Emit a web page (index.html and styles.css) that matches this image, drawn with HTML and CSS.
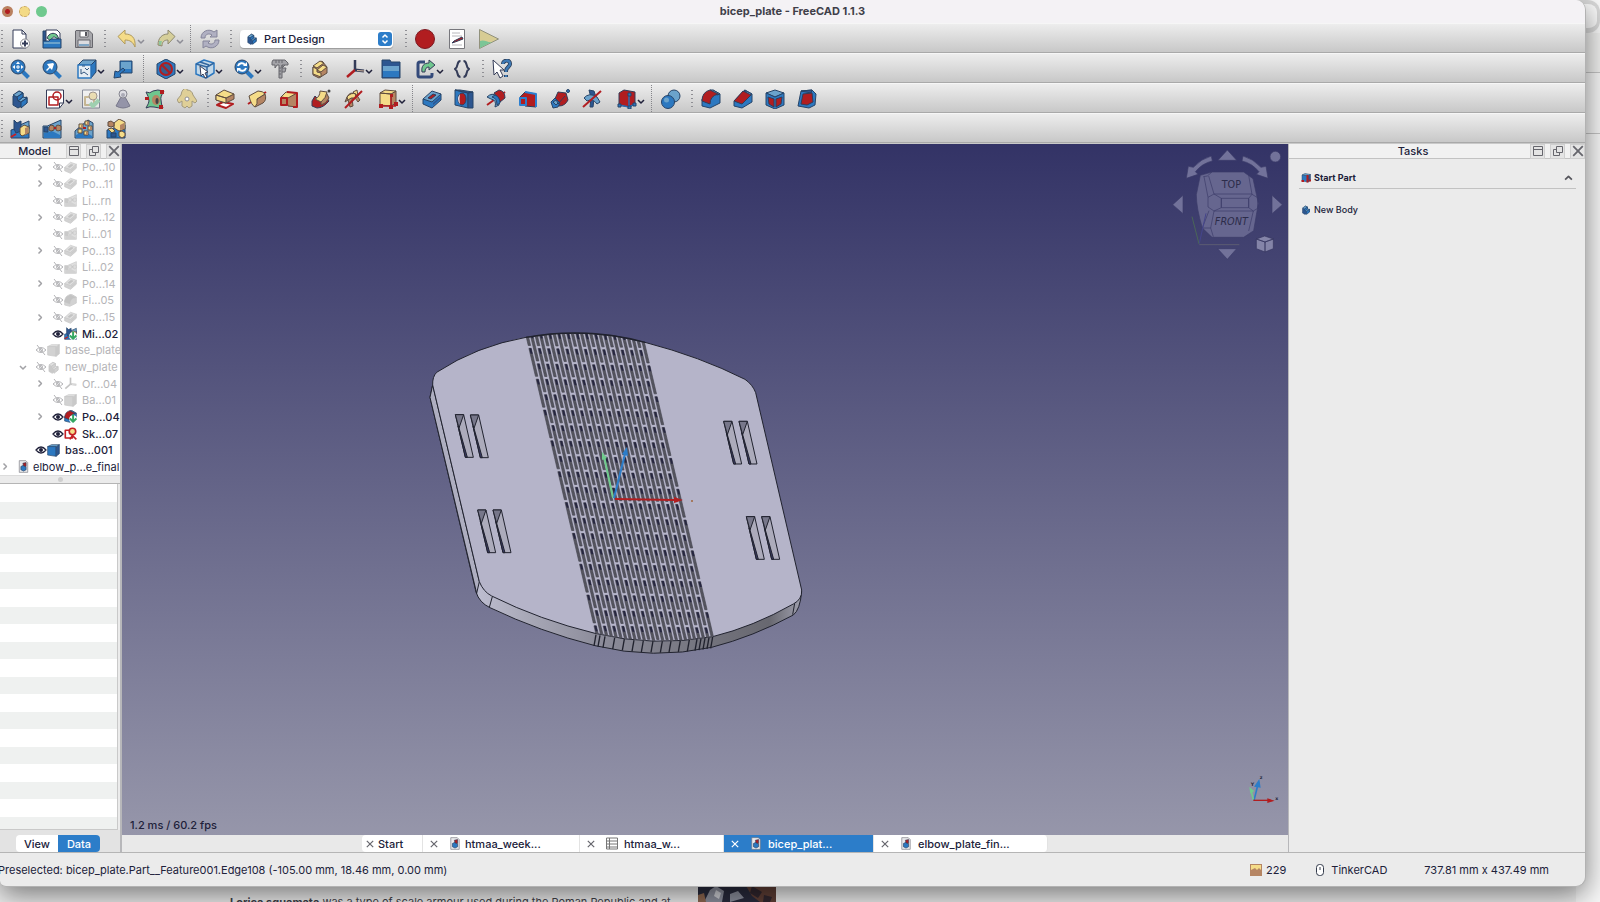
FILE: index.html
```html
<!DOCTYPE html>
<html lang="en">
<head>
<meta charset="utf-8">
<title>bicep_plate - FreeCAD 1.1.3</title>
<link rel="stylesheet" href="styles.css">
</head>
<body>
<svg class="defs" aria-hidden="true">
  <symbol id="new" viewBox="0 0 20 20"><path class="w" d="M3 1h9l4 4v14H3z"/><path class="n" d="M12 1v4h4"/><circle class="w" cx="15" cy="14.500" r="4.500" stroke="#8a8a90"/><path class="n thick" d="M15 11.500v6M12 14.500h6"/></symbol>
  <symbol id="open" viewBox="0 0 20 20"><path class="d" d="M1 2h4v10H1z"/><path class="w" d="M4 1h11l3 3v10H4z"/><path class="g" d="M5 9c2-5 7-6 10-3l2 4-3-1c-2-2-4-1-5 3z"/><path class="b" d="M1 12h6l2-2h10v9H1z"/><path class="l nos" d="M2 13h16v2H2z"/></symbol>
  <symbol id="save" viewBox="0 0 20 20"><path fill="#a8a8ac" stroke="#66666c" d="M2 1.500h13L18.500 5v13.500h-17V2z"/><path class="w" stroke="#66666c" d="M6 2h8v6H6z"/><path class="nos" fill="#55555c" d="M11 3h2v4h-2z"/><path fill="#dcdce0" stroke="#66666c" d="M4 11h12v7H4z"/><path class="nos" fill="#7fa5c4" d="M5 15h10v2H5z"/></symbol>
  <symbol id="undo" viewBox="0 0 20 20"><path class="y" stroke="#b09a5c" d="M1 7.500 8 1v4c6 0 11 3 10 13-2-5-5-7-10-7v4z"/></symbol>
  <symbol id="redo" viewBox="0 0 20 20"><path fill="#d6cf9a" stroke="#8e8a70" d="M19 7.500 12 1v4C6 5 2 9 2 16l4 1c0-4 2-6 6-6v4z"/><path class="nos" fill="#8fc59c" d="M3 12h3l-1 4H3z"/></symbol>
  <symbol id="refresh" viewBox="0 0 20 20"><path fill="#b0b0c2" stroke="#85859a" d="M1 9c0-7 8-10 13-6l3-2v7h-7l2-2C9 4 5 5 5 9zM19 11c0 7-8 10-13 6l-3 2v-7h7l-2 2c3 2 7 1 7-3z"/></symbol>
  <symbol id="body" viewBox="0 0 20 20"><path class="d" d="M3 7v9l5 3 9-5V8l-4 1V4l-4-2z"/><path class="l" d="m3 6 6-4 4 2-6 4zM8 12l5-4 4 1-6 4z"/><path class="b" d="m7 8 6-4v4l-5 4zM11 13l6-4v5l-6 5z"/></symbol>
  <symbol id="record" viewBox="0 0 20 20"><circle class="r" cx="10" cy="10" r="9.500" stroke="#7c1a22"/></symbol>
  <symbol id="macro" viewBox="0 0 20 20"><path class="w" stroke="#77777c" d="M2.500.5h15v19h-15z"/><path class="n" stroke="#b8b8bc" d="M5 4h8M5 7h10M5 16h10"/><path class="r" d="m7 12 8-4 1 2-8 3-3 1z"/></symbol>
  <symbol id="play" viewBox="0 0 20 20"><path fill="#d7cc94" stroke="#91917c" d="M.5.5 19.500 10 .5 19.500z"/><path class="nos" fill="#7bc596" d="M1 12c4-2 8 2 12 1L1 19z"/></symbol>

  <symbol id="zoomfit" viewBox="0 0 20 20"><path class="n" stroke="#2c78c0" stroke-width="4" d="m13 13 5.500 5.500"/><circle class="b" cx="8" cy="8" r="7"/><path class="w nos" d="m8 2.500 2 2.500H6zM8 13.500 6 11h4zM2.500 8 5 6v4zM13.500 8 11 10V6z"/><path class="n" stroke="#fff" d="M8 6v4M6 8h4"/></symbol>
  <symbol id="zoomsel" viewBox="0 0 20 20"><path class="n" stroke="#2c78c0" stroke-width="4" d="m13 13 5.500 5.500"/><circle class="b" cx="8" cy="8" r="7"/><path class="w nos" d="m5 5 6-1 1 1-2 6-2-2-3 3-1-1 3-3z"/></symbol>
  <symbol id="cube" viewBox="0 0 20 20"><path class="l" d="M1 6 6 1h13l-5 5z"/><path class="b" d="m14 6 5-5v12l-5 6z"/><path fill="#e4ecf3" stroke="#2c78c0" stroke-width="1.500" d="M1 6h13v13H1z"/><path class="n" stroke="#33567f" d="M4 10v5l3-2 4 3M8 9l2 2 2-2M5 7h3"/></symbol>
  <symbol id="align" viewBox="0 0 20 20"><path class="b" d="M7 2h12v12H7z"/><path class="l nos" d="M8 3h10v7H8z"/><path class="b" d="m10 9 2 2-5 4 1 3-7 1 1-7 3 1z"/></symbol>
  <symbol id="nodraw" viewBox="0 0 20 20"><path class="b" d="m10 0 9 5v10l-9 5-9-5V5z"/><circle fill="#3a5d8c" cx="10" cy="10" r="6"/><circle class="n" cx="10" cy="10" r="6" stroke="#b11d20" stroke-width="2"/><path class="n" stroke="#b11d20" stroke-width="2" d="m6 6 8 8"/></symbol>
  <symbol id="cubesel" viewBox="0 0 20 20"><path fill="#c3d8e8" stroke="#2c78c0" stroke-width="1.500" d="m1 5 8-4 10 3v10l-8 5-10-4z"/><path class="n" stroke="#33679f" stroke-width="1.500" d="m1 5 11 3 7-4M12 8v11M5 3l9 3"/><path class="w" d="m5 7 8 6-3 1 2 4-2 1-2-4-2 2z"/></symbol>
  <symbol id="zoomsync" viewBox="0 0 20 20"><path class="n" stroke="#2c78c0" stroke-width="4" d="m13 13 5.500 5.500"/><circle class="b" cx="8" cy="8" r="7"/><path class="n" stroke="#fff" stroke-width="2" d="M4 7c1-3 5-4 7-1M12 9c-1 3-5 4-7 1"/><path class="w nos" d="M9 7h4V3zM3 9v4l4-4z"/></symbol>
  <symbol id="caliper" viewBox="0 0 20 20"><path fill="#a3a3a8" stroke="#66666c" d="M3 1h12l3 3v2h-6v13H9V6H7L5 9V6H2V3zM12 9h4l-1 4h-3M12 6v3l3-3"/><path class="n" stroke="#66666c" d="M6 1v3M9 1v3M12 1v3M9 9h2M9 12h2M9 15h2"/></symbol>
  <symbol id="part" viewBox="0 0 20 20"><path class="t" d="M3 8v8l6 3 8-5V8l-5-6z"/><path class="y" d="m3 7 7-5 4 2-7 5zM3 8l4 2v3l4 1v4l-8-3zM7 11l6-5 4 2-6 5z"/></symbol>
  <symbol id="axes" viewBox="0 0 20 20"><path class="n" stroke="#343c58" stroke-width="2.500" d="M10 11V1"/><path class="n" stroke="#b11d20" stroke-width="2.500" d="m10 11-8 7"/><path class="n" stroke="#343c58" stroke-width="3" d="m10 11 9 1"/><path class="n" stroke="#d8b79a" d="m12 11.500 7 .5"/></symbol>
  <symbol id="folder" viewBox="0 0 20 20"><path class="d" d="M1 1h8l1 2h9v16H1z"/><path class="b nos" d="M2 7h16v11H2z"/><path class="l nos" d="M2 7h16v5H2z"/></symbol>
  <symbol id="link" viewBox="0 0 20 20"><path class="n" stroke="#344a7a" stroke-width="3" d="M9 3H4Q2 3 2 5v11q0 2 2 2h10q2 0 2-2v-2"/><path class="g" d="M6 13C5 7 8 4 13 4V1l6 5-6 5V8c-3 0-4 2-4 5z"/></symbol>
  <symbol id="braces" viewBox="0 0 20 20"><path class="n thick" d="M8.500 2C4 2 7 8 3 10c4 2 1 8 5.500 8M11.500 2c4.500 0 1.500 6 5.500 8-4 2-1 8-5.500 8"/></symbol>
  <symbol id="whats" viewBox="0 0 20 20"><path class="n" stroke="#25364f" stroke-width="4" d="M11 5c0-4 7-5 7 0 0 3-4 3-4 7v1M14 16v2"/><path class="n" stroke="#3e79b4" stroke-width="2.500" d="M11 5c0-4 7-5 7 0 0 3-4 3-4 7v1M14 16v2"/><path class="w" d="m1 1 11 10H8l3 6-3 2-3-6-3 3z"/></symbol>

  <symbol id="sketch" viewBox="0 0 20 20"><path class="w" d="M1.500 1h17v13l-4 5h-13z"/><path class="n" stroke="#b11d20" stroke-width="1.500" d="M4 8h9v8H4z"/><circle class="n" cx="12" cy="7" r="4" stroke="#b11d20" stroke-width="1.500"/><path class="n" d="M18.500 14h-4v5"/></symbol>
  <symbol id="sketchok" viewBox="0 0 20 20"><g opacity=".5"><path class="w" d="M1.500 1h17v18h-17z"/><path class="n" stroke="#b89a55" stroke-width="2" d="M4 8h9v8H4z"/><circle class="y" cx="12" cy="7" r="4"/></g><path class="n" stroke="#9fcfb0" stroke-width="4" d="m9 14 3 3 6-6"/></symbol>
  <symbol id="weight" viewBox="0 0 20 20"><path fill="#9494a8" stroke="#77778a" d="m8 8-5 9q7 4 14 0l-5-9z"/><circle fill="#dedee4" stroke="#85858f" cx="10" cy="5" r="4"/><circle class="nos" fill="#aaaab6" cx="10" cy="6" r="2"/></symbol>
  <symbol id="subshape" viewBox="0 0 20 20"><path class="g" d="M1 3q4 2 7-1 4-2 11 0-4 6-3 9 0 4 2 8-5 0-9-1-4-1-8 1 3-5 3-7 0-4-3-9z"/><ellipse class="t nos" cx="11" cy="11" rx="4" ry="5"/><ellipse fill="#444" cx="12" cy="12" rx="1.500" ry="3"/><path class="r nos" d="M15 1h4v4h-4zM0 8h4v3H0zM14 16h4v4h-4z"/></symbol>
  <symbol id="clone" viewBox="0 0 20 20"><path fill="#dfcf97" stroke="#a39a7d" d="M10 1q5 0 6 5l4 6-2 2-3-2v5l-3 2-2-2-2 2-3-2v-5l-3 2-2-3 4-5q1-7 6-7z"/><circle class="w" cx="10" cy="10" r="2" stroke="#8f8f96"/></symbol>
  <symbol id="pad" viewBox="0 0 20 20"><path fill="#fff" stroke="#b11d20" stroke-width="2" d="m2 16 6-3 10 2-7 4z"/><path class="t" d="m1 6 10 3 8-4v5l-8 4-10-3z"/><path class="y" d="m1 6 8-5 10 4-8 4zM1 6l10 3v5L1 11z"/></symbol>
  <symbol id="revolve" viewBox="0 0 20 20"><path class="n" stroke="#b11d20" stroke-width="2" d="M1 15 19 3"/><path class="t" d="m8 18 8-4q4-3 2-9l-8 5z"/><path class="y" d="m2 7 9-5q5 0 7 3l-8 5q1 5-2 8Q4 16 2 7z"/></symbol>
  <symbol id="loft" viewBox="0 0 20 20"><path class="t" d="m7 8 11-4v14l-9-1z"/><path class="y" d="m2 8 5-5 11 1-9 5z"/><path fill="#b58563" stroke="#b11d20" stroke-width="2" d="M2 9h6v7H2z"/><path class="n" stroke="#b11d20" stroke-width="2" d="m8 3 10 1v14h-4"/></symbol>
  <symbol id="pipe" viewBox="0 0 20 20"><path class="r" d="m1 12 3-5 6 6 6-4 2 3q-6 7-12 7l-5-2z"/><path class="t" d="M10 12q5-3 5-9l3 6q-3 6-8 7z"/><path class="y" d="M4 10q5-2 5-8l7 1q-1 6-6 10z"/><circle fill="#444" cx="18" cy="2" r="1.500"/></symbol>
  <symbol id="helix" viewBox="0 0 20 20"><path class="t" d="M4 8q3-6 9-3l4 6-2 2q-2-5-6-4l1 8-3 1-2-7-3 2z"/><path class="y" d="M4 8q4-5 9-3l-1 4q-4-1-7 2zM10 3l4-2 1 6-3-2z"/><path class="n" stroke="#b11d20" stroke-width="2" d="M2 19 19 2"/></symbol>
  <symbol id="prim" viewBox="0 0 20 20"><path class="t" d="m13 5 5-3v12l-5 3z"/><path class="y" d="M2 4 7 1l11 1-5 3zM2 4l11 1v12L2 16z"/><path class="n" stroke="#b11d20" stroke-width="1.500" d="M13 6v11M3 17h15"/><path class="r nos" d="M1 15h4v4H1zM11 16h4v4h-4zM16 13h4v4h-4zM12 5h3v3h-3z"/></symbol>
  <symbol id="startpart" viewBox="0 0 20 20"><path class="l" d="M2 4 8 1l11 2-5 3z"/><path class="b" d="M2 4l12 2v12L2 16z"/><path class="d" d="m14 6 5-3v12l-5 3z"/><path class="r nos" d="M11 4h4v15h-4zM1 14h5v4H1zM16 13h4v4h-4z"/></symbol>

  <symbol id="pocket" viewBox="0 0 20 20"><path class="b" d="M1 10v5l9 4 9-8V5L10 9z"/><path class="l" d="m1 10 9-8 9 3-9 8z"/><path class="r" d="m6 9 5-4 3 1-5 4z"/><path class="d nos" d="m11 14 7-6v2l-7 6z"/></symbol>
  <symbol id="hole" viewBox="0 0 20 20"><path class="b" d="m1 1 13 3v15L1 16z"/><path class="d" d="M14 4l5-1v16h-5zM1 1h5l13 2-5 1z"/><ellipse class="r" cx="8" cy="10" rx="4" ry="6"/><path class="nos" fill="#dbe6ef" d="M6 5q-4 5 0 10-1-5 0-10z"/></symbol>
  <symbol id="groove" viewBox="0 0 20 20"><path class="n" stroke="#b11d20" stroke-width="2" d="M1 16 19 3"/><path class="r" d="m8 4 5-3q6 1 6 8l-5 4z"/><path class="l" d="M1 8q5-5 10-1 3 3 2 9l-4 2q2-7-4-8z"/><path class="b" d="M6 8q5 1 5 8l3-2q0-6-5-8z"/></symbol>
  <symbol id="subloft" viewBox="0 0 20 20"><path class="r" d="m2 8 5-5 11 2v13l-11-1z"/><path fill="#b11d20" stroke="#2c7fd0" stroke-width="2" d="M2 9h6v7H2z"/><path class="n" stroke="#2c7fd0" stroke-width="2" d="m7 3 11 2v13"/></symbol>
  <symbol id="subpipe" viewBox="0 0 20 20"><path class="r" d="M8 3l8 1 2 7q-3 6-9 6l-5-5z"/><path class="b" d="m1 13 4-4 5 5-2 4-5 1z"/><path class="l" d="m3 13 3-2 2 3-2 2z"/><path class="n" d="m8 15 7-8"/><circle class="b" cx="18" cy="2" r="1.500"/></symbol>
  <symbol id="subhelix" viewBox="0 0 20 20"><path class="d" d="m7 1 5 1 2 6-2 2-1 8H8l1-9z"/><path class="l" d="M2 9q5-6 13-1l3 5-3 2q-4-6-10-3z"/><path class="n" stroke="#b11d20" stroke-width="2" d="M1 18 19 2"/></symbol>
  <symbol id="subprim" viewBox="0 0 20 20"><path class="r" d="M2 4 7 1l11 2v12l-6 3-10-2z"/><path class="n" stroke="#2c6db3" stroke-width="1.500" d="M12 6v12M2 16l10 2 6-3"/><path class="b" d="M1 15h3v3H1zM11 17h3v3h-3zM16 14h3v3h-3zM11 4h3v3h-3z"/></symbol>
  <symbol id="boolean" viewBox="0 0 20 20"><circle class="l" cx="13" cy="7" r="6"/><circle class="b" cx="7" cy="13" r="6.500"/><circle class="l nos" cx="5.500" cy="11" r="2.500"/></symbol>
  <symbol id="fillet" viewBox="0 0 20 20"><path class="b" d="M1 10v7l8 2 10-5V5l-7-4z"/><path class="l" d="M9 1h3l7 4-3 1z"/><path class="r" d="M1 12Q1 3 9 1l8 4q-8 2-8 10z"/></symbol>
  <symbol id="chamfer" viewBox="0 0 20 20"><path class="b" d="M1 12v5l8 2 10-6V5l-7-4z"/><path class="l" d="m11 1 8 4-3 2z"/><path class="r" d="m1 12 9-10 8 4-9 9z"/></symbol>
  <symbol id="draft" viewBox="0 0 20 20"><path class="l" d="M1 4 10 1l9 3-9 4z"/><path class="b" d="M1 4v12l9 4 9-4V4l-9 4z"/><path class="r" d="m3 8 6 2v8l-5-3zM17 8l-6 2v8l5-3z"/></symbol>
  <symbol id="thick" viewBox="0 0 20 20"><path class="b" d="m4 2 11-1 4 4-1 11-6 3-11-2z"/><path class="d" d="m4 2 11-1-1 3z"/><path class="r" d="m6 5 9-1 1 9-6 3-6-1z"/></symbol>

  <symbol id="mirror" viewBox="0 0 20 20"><path class="b" d="M1 11 19 6v13H1z"/><path class="l" d="m10 6 9-4v8l-6 2z"/><path class="d" d="m4 1 3 3 4-2v10l-5 2-2-4z"/><path class="y" d="m10 9 4-3 5 2v6l-7 3-2-2z"/><path class="t nos" d="m15 9 3-1v6l-3 2z"/><path class="n" stroke="#c42125" stroke-width="2" d="m1 18 5-3"/></symbol>
  <symbol id="linear" viewBox="0 0 20 20"><path class="l" d="M1 7q4 1 9-2l9-4v18H1z"/><path class="b nos" d="m2 14 8-2 8 4v3H2z"/><path class="d" d="M2 8h4v5H2z"/><path class="t" d="m7 8 2-2 3 1v4l-3 1-2-1zM14 7l2-1 3 1v4l-3 1-2-1z"/><path class="r nos" d="M12 8h2v2h-2z"/></symbol>
  <symbol id="polar" viewBox="0 0 20 20"><path class="l" d="M1 12 14 1l5 3v15H1z"/><path class="b nos" d="m2 16 8-4 8 5v2H2z"/><path class="y" d="M5 5h4v4H5zM11 2h4v4h-4zM14 7h4v4h-4zM10 12h4v4h-4zM4 10h4v4H4z"/><path class="t nos" d="M7 6h2v3H7zM13 3h2v3h-2zM16 8h2v3h-2zM12 13h2v3h-2z"/><path class="r nos" d="M9 8h3v2H9z"/></symbol>
  <symbol id="multi" viewBox="0 0 20 20"><path class="b" d="M1 11 19 6v13H1z"/><path class="y" d="m8 4 5-4 6 3v7l-6 2-5-3z"/><path class="t nos" d="m14 6 4-2v6l-4 1z"/><path class="t" d="m2 3 3-1 3 2v3L5 8 2 7z"/><path class="y" d="m13 13 3-1 3 2v3l-3 2-3-2zM2 10l4-1 3 3-3 2z"/><path class="d" d="M5 14h5v4H5z"/></symbol>

  <symbol id="chev" viewBox="0 0 8 5"><path fill="none" stroke="currentColor" stroke-width="1.500" d="m1 1 3 3 3-3"/></symbol>
  <symbol id="close" viewBox="0 0 10 10"><path fill="none" stroke="currentColor" stroke-width="1.500" d="m1 1 8 8M9 1 1 9"/></symbol>
  <symbol id="dockmin" viewBox="0 0 12 12"><path fill="none" stroke="currentColor" d="M1.500 1.500h9v9h-9zM1.500 4.500h9"/></symbol>
  <symbol id="dockfloat" viewBox="0 0 12 12"><path fill="none" stroke="currentColor" d="M4.500 1.500h6v6h-6zM4.500 4.500h-3v6h6v-3"/></symbol>
  <symbol id="eye" viewBox="0 0 12 10"><path fill="none" stroke="currentColor" stroke-width="1.300" d="M1 5q5-6 10 0-5 6-10 0z"/><circle fill="currentColor" cx="6" cy="5" r="2"/></symbol>
  <symbol id="eyeoff" viewBox="0 0 12 10"><path fill="none" stroke="currentColor" d="M1 5q5-5 10 0-5 5-10 0zM2 0l8 10"/><circle fill="none" stroke="currentColor" cx="6" cy="5" r="1.500"/></symbol>
  <symbol id="solid" viewBox="0 0 20 20"><path class="l" d="m1 4 6-3h12l-5 4z"/><path class="b" d="M1 4h13v15L1 17z"/><path class="d" d="m14 5 5-4v14l-5 4z"/></symbol>
  <symbol id="tip" viewBox="0 0 20 20"><circle fill="#fff" cx="14" cy="14" r="6"/><path fill="none" stroke="#35a763" stroke-width="3" d="M14 7v10M9 13l5 5 5-5"/></symbol>
  <symbol id="sketchtree" viewBox="0 0 20 20"><path fill="#fff" stroke="#c42125" stroke-width="2.500" d="M2 5h11v12H2z"/><circle fill="#f5dc88" stroke="#c42125" stroke-width="2.500" cx="13" cy="7" r="5"/><path fill="none" stroke="#c42125" stroke-width="2.500" d="m9 19 4-6 6 6"/></symbol>
  <symbol id="file" viewBox="0 0 16 20"><path fill="#e9e9ec" stroke="#77777f" d="M1.500 1h10l3 3v15h-13z"/><path class="b" d="m4 10 4-2 4 3v4l-4 2-4-2z"/><path class="r" d="m7 5 5-1v6L8 9z"/></symbol>
  <symbol id="sheet" viewBox="0 0 12 12"><path fill="#fff" stroke="#777" d="M.5.500h11v11H.5zM.5 3.500h11M.5 6.500h11M.5 9.500h11M3.500.500v11"/></symbol>
</svg>

<div class="desktop" aria-hidden="true">
  <div class="browser-edge"><span class="edge-tab"></span><span class="edge-bar"></span><span class="edge-bar"></span></div>
  <p class="article"><b>Lorica squamata</b> was a type of scale armour used during the Roman Republic and at</p>
  <svg class="photo" viewBox="0 0 78 16" preserveAspectRatio="xMidYMin slice"><path fill="#292b3d" d="M0 0h78v16H0z"/><path fill="#8c8f9d" d="M6 16 12 4l6-4 8 5-2 11zM32 16V8l8-3 6 7z"/><path fill="#d0d1d7" d="m18 4 5 3-2 6-5-3z"/><path fill="#603f36" d="M48 0h30v16H62l-8-6z"/><path fill="#32272f" d="m54 0 10 6-4 6-8-5zM66 9l8 2-2 5h-7z"/><path fill="#8e6750" d="m0 9 6-2 2 9H0z"/></svg>
</div>

<div class="window">
  <header class="titlebar">
    <div class="lights"><button class="light light-close" aria-label="Close window"></button><button class="light light-min" aria-label="Minimize"></button><button class="light light-max" aria-label="Zoom window"></button></div>
    <h1>bicep_plate - FreeCAD 1.1.3</h1>
  </header>

  <div class="toolbar">
    <i class="grip grip-first"></i>
    <button class="tool" aria-label="New"><svg><use href="#new"/></svg></button>
    <button class="tool" aria-label="Open"><svg><use href="#open"/></svg></button>
    <button class="tool" aria-label="Save"><svg><use href="#save"/></svg></button>
    <i class="grip"></i>
    <button class="tool menu faded" aria-label="Undo"><svg><use href="#undo"/></svg><svg class="chev"><use href="#chev"/></svg></button>
    <button class="tool menu faded" aria-label="Redo"><svg><use href="#redo"/></svg><svg class="chev"><use href="#chev"/></svg></button>
    <i class="sep"></i>
    <button class="tool" aria-label="Refresh"><svg><use href="#refresh"/></svg></button>
    <i class="grip"></i>
    <div class="workbench"><svg class="wb-icon"><use href="#body"/></svg><select aria-label="Workbench"><option>Part Design</option></select><svg class="wb-step" viewBox="0 0 14 14"><rect width="14" height="14" rx="3" fill="#2c7dc9"/><path fill="none" stroke="#fff" stroke-width="1.500" d="m4.500 5.500 2.500-2.500 2.500 2.500M4.500 8.500 7 11l2.500-2.500"/></svg></div>
    <i class="grip"></i>
    <button class="tool" aria-label="Record macro"><svg><use href="#record"/></svg></button>
    <button class="tool" aria-label="Macros"><svg><use href="#macro"/></svg></button>
    <button class="tool" aria-label="Execute macro"><svg><use href="#play"/></svg></button>
  </div>

  <div class="toolbar">
    <i class="grip grip-first"></i>
    <button class="tool" aria-label="Fit all"><svg><use href="#zoomfit"/></svg></button>
    <button class="tool" aria-label="Fit selection"><svg><use href="#zoomsel"/></svg></button>
    <button class="tool menu" aria-label="Standard views"><svg><use href="#cube"/></svg><svg class="chev"><use href="#chev"/></svg></button>
    <button class="tool" aria-label="Align to selection"><svg><use href="#align"/></svg></button>
    <i class="sep"></i>
    <button class="tool menu" aria-label="Draw style"><svg><use href="#nodraw"/></svg><svg class="chev"><use href="#chev"/></svg></button>
    <button class="tool menu" aria-label="Box selection"><svg><use href="#cubesel"/></svg><svg class="chev"><use href="#chev"/></svg></button>
    <button class="tool menu" aria-label="Tree view sync"><svg><use href="#zoomsync"/></svg><svg class="chev"><use href="#chev"/></svg></button>
    <button class="tool" aria-label="Measure"><svg><use href="#caliper"/></svg></button>
    <i class="grip"></i>
    <button class="tool" aria-label="Part"><svg><use href="#part"/></svg></button>
    <button class="tool menu" aria-label="Datum"><svg><use href="#axes"/></svg><svg class="chev"><use href="#chev"/></svg></button>
    <button class="tool" aria-label="Group"><svg><use href="#folder"/></svg></button>
    <button class="tool menu" aria-label="Link"><svg><use href="#link"/></svg><svg class="chev"><use href="#chev"/></svg></button>
    <button class="tool" aria-label="Expressions"><svg><use href="#braces"/></svg></button>
    <i class="grip"></i>
    <button class="tool" aria-label="What's this"><svg><use href="#whats"/></svg></button>
  </div>

  <div class="toolbar">
    <i class="grip grip-first"></i>
    <button class="tool" aria-label="Body"><svg><use href="#body"/></svg></button>
    <button class="tool menu" aria-label="Sketch"><svg><use href="#sketch"/></svg><svg class="chev"><use href="#chev"/></svg></button>
    <button class="tool" aria-label="Validate sketch"><svg><use href="#sketchok"/></svg></button>
    <button class="tool" aria-label="Check geometry"><svg><use href="#weight"/></svg></button>
    <button class="tool" aria-label="Shape binder"><svg><use href="#subshape"/></svg></button>
    <button class="tool" aria-label="Clone"><svg><use href="#clone"/></svg></button>
    <i class="grip grip-narrow"></i>
    <button class="tool" aria-label="Pad"><svg><use href="#pad"/></svg></button>
    <button class="tool" aria-label="Revolution"><svg><use href="#revolve"/></svg></button>
    <button class="tool" aria-label="Additive loft"><svg><use href="#loft"/></svg></button>
    <button class="tool" aria-label="Additive pipe"><svg><use href="#pipe"/></svg></button>
    <button class="tool" aria-label="Additive helix"><svg><use href="#helix"/></svg></button>
    <button class="tool menu" aria-label="Additive primitive"><svg><use href="#prim"/></svg><svg class="chev"><use href="#chev"/></svg></button>
    <i class="sep"></i>
    <button class="tool" aria-label="Pocket"><svg><use href="#pocket"/></svg></button>
    <button class="tool" aria-label="Hole"><svg><use href="#hole"/></svg></button>
    <button class="tool" aria-label="Groove"><svg><use href="#groove"/></svg></button>
    <button class="tool" aria-label="Subtractive loft"><svg><use href="#subloft"/></svg></button>
    <button class="tool" aria-label="Subtractive pipe"><svg><use href="#subpipe"/></svg></button>
    <button class="tool" aria-label="Subtractive helix"><svg><use href="#subhelix"/></svg></button>
    <button class="tool menu" aria-label="Subtractive primitive"><svg><use href="#subprim"/></svg><svg class="chev"><use href="#chev"/></svg></button>
    <i class="sep"></i>
    <button class="tool" aria-label="Boolean"><svg><use href="#boolean"/></svg></button>
    <i class="grip"></i>
    <button class="tool" aria-label="Fillet"><svg><use href="#fillet"/></svg></button>
    <button class="tool" aria-label="Chamfer"><svg><use href="#chamfer"/></svg></button>
    <button class="tool" aria-label="Draft"><svg><use href="#draft"/></svg></button>
    <button class="tool" aria-label="Thickness"><svg><use href="#thick"/></svg></button>
  </div>

  <div class="toolbar">
    <i class="grip grip-first"></i>
    <button class="tool" aria-label="Mirrored"><svg><use href="#mirror"/></svg></button>
    <button class="tool" aria-label="Linear pattern"><svg><use href="#linear"/></svg></button>
    <button class="tool" aria-label="Polar pattern"><svg><use href="#polar"/></svg></button>
    <button class="tool" aria-label="Multi-transform"><svg><use href="#multi"/></svg></button>
  </div>

  <main class="work">
    <aside class="dock dock-left">
      <div class="dock-head"><h2>Model</h2><div class="dock-btns"><button aria-label="Collapse Model"><svg><use href="#dockmin"/></svg></button><button aria-label="Float Model"><svg><use href="#dockfloat"/></svg></button><button aria-label="Close Model"><svg><use href="#close"/></svg></button></div></div>
      <ul class="tree" id="tree"></ul>
      <div class="splitter"><i></i></div>
      <div class="props"></div>
      <div class="prop-tabs"><button>View</button><button class="on">Data</button></div>
    </aside>

    <section class="center">
      <div class="viewport">
        <svg class="scene" viewBox="122 144 1166 691" preserveAspectRatio="xMidYMid slice">
          <defs>
            <clipPath id="top"><path d="M98 225Q97 200 110 187Q230 108 378 82Q560 50 735 97Q900 140 1035 208Q1058 224 1067 248L1205 840Q1207 868 1180 882Q1060 950 938 980Q760 1012 585 970Q420 930 275 858Q250 845 238 815Z"/></clipPath>
            <linearGradient id="rim" x1="230" x2="1205" y1="0" y2="0" gradientUnits="userSpaceOnUse"><stop offset="0" stop-color="#bdbdd0"/><stop offset=".15" stop-color="#a9a9b8"/><stop offset=".37" stop-color="#8d8d9b"/><stop offset=".7" stop-color="#74747e"/><stop offset=".9" stop-color="#686870"/><stop offset="1" stop-color="#a0a0ae"/></linearGradient>
          </defs>
          <g transform="translate(400 310) scale(.33333)" stroke="#20222e" stroke-width="3" stroke-linejoin="round">
            <path fill="url(#rim)" d="M98 225 90 262 228 846Q238 878 270 893Q420 965 585 1007Q760 1050 935 1012Q1060 980 1180 915Q1200 900 1205 845L1180 840 585 900 275 800Z"/>
            <path fill="#aeaec0" d="M98 225 90 262 230 850 238 815Z"/>
            <path fill="#b5b4c9" d="M98 225Q97 200 110 187Q230 108 378 82Q560 50 735 97Q900 140 1035 208Q1058 224 1067 248L1205 840Q1207 868 1180 882Q1060 950 938 980Q760 1012 585 970Q420 930 275 858Q250 845 238 815Z"/>
            <path fill="none" d="m277 860-9 32M1184 880l-6 34"/>
            <g id="slits" clip-path="url(#top)" stroke-width="2"></g>
            <path fill="none" stroke-width="4" d="M378 82Q560 50 735 97"/>
            <g id="ribs" stroke-width="4"></g>
            <g id="slots"></g>
          </g>
          <g fill="none" stroke-width="2"><path stroke="#6fcb8d" d="m613 498-9-42"/><path stroke="#2c7dc9" d="m614 498 11-44"/><path stroke="#b11d20" d="m615 499 60 1"/></g>
          <path fill="#6fcb8d" d="m602 452 5 6-5 2z"/><path fill="#2c7dc9" d="m627 447 1 9-6-2z"/><path fill="#b11d20" d="m683 500-9-3v6z"/><path fill="#a5795f" d="M691 500h2v2h-2z"/>
        </svg>
        <svg class="navcube" viewBox="90 18 351 351">
          <g fill="#72729a" stroke="#3b3b68" stroke-width="2" stroke-linejoin="round">
            <path d="m262 30 28 31h-56zM262 358l-29-32h57zM98 194l31-28v55zM427 194l-31-28v55z"/>
            <circle cx="406" cy="50" r="16"/>
            <path d="M214 48q-30 8-54 34l-15-3-6 36 35-12-8-8q22-26 51-32zM309 48q30 8 54 34l15-3 6 36-35-12 8-8q-22-26-51-32z"/>
            <path fill="#66668f" d="m216 96h95l28 20 16 74-14 82-30 20h-95l-29-28q-18-60-18-100l12-58z"/>
            <path fill="none" d="m216 96-14 12-12 2M206 108l16 54M326 106l10 57M192 110l12 62M207 212l-20 52M222 213l-10 51 8 26M340 213l-14 60M222 162h114M222 213h118M187 264h25M204 172l18-10 22 13v28l-22 10-18-12zM244 175h82v28h-82zM326 175l10-12 17 10v32l-13 8-14-10z"/>
          </g>
          <g class="cube-text"><text x="274" y="144" text-anchor="middle">TOP</text><text class="front" x="274" y="256" text-anchor="middle">FRONT</text></g>
          <path fill="none" stroke="#4a6658" stroke-width="3" d="m156 230 21 82"/><path fill="none" stroke="#45458c" stroke-width="3" d="m178 310 20-90"/><path fill="none" stroke="#5c5c72" stroke-width="3" d="M178 314h120"/>
          <g fill="#8484a8" stroke="#34345e" stroke-width="2"><path d="m349 297 25-9 26 9-25 9zM349 297l26 9v30l-26-10zM400 297l-25 9v30l25-10z"/></g>
        </svg>
        <svg class="triad" viewBox="0 0 96 96"><path fill="none" stroke="#2c7dc9" stroke-width="5" d="m24 76 10-40"/><path fill="#2c7dc9" d="m40 12 4 26-20-3z"/><path fill="none" stroke="#6fcb8d" stroke-width="5" d="m22 74-6-24"/><path fill="#6fcb8d" d="m10 36 15 12-12 8z"/><path fill="none" stroke="#b11d20" stroke-width="4" d="M22 76h46"/><path fill="#b11d20" d="m86 77-22-7v14z"/><g class="triad-text"><text x="41" y="11">z</text><text x="14" y="34">Y</text><text x="88" y="76">x</text></g></svg>
        <p class="fps">1.2 ms / 60.2 fps</p>
      </div>
      <nav class="doc-tabs">
        <div class="doc-tab tab-start"><button class="x" aria-label="Close Start"><svg><use href="#close"/></svg></button><button class="name">Start</button></div>
        <div class="doc-tab tab-week"><button class="x" aria-label="Close htmaa_week"><svg><use href="#close"/></svg></button><button class="name"><svg><use href="#file"/></svg>htmaa_week...</button></div>
        <div class="doc-tab tab-sheet"><button class="x" aria-label="Close htmaa_w"><svg><use href="#close"/></svg></button><button class="name"><svg><use href="#sheet"/></svg>htmaa_w...</button></div>
        <div class="doc-tab tab-plate on"><button class="x" aria-label="Close bicep_plate"><svg><use href="#close"/></svg></button><button class="name"><svg><use href="#file"/></svg>bicep_plat...</button></div>
        <div class="doc-tab tab-elbow"><button class="x" aria-label="Close elbow_plate"><svg><use href="#close"/></svg></button><button class="name"><svg><use href="#file"/></svg>elbow_plate_fin...</button></div>
      </nav>
    </section>

    <aside class="dock dock-right">
      <div class="dock-head"><h2>Tasks</h2><div class="dock-btns"><button aria-label="Collapse Tasks"><svg><use href="#dockmin"/></svg></button><button aria-label="Float Tasks"><svg><use href="#dockfloat"/></svg></button><button aria-label="Close Tasks"><svg><use href="#close"/></svg></button></div></div>
      <div class="task">
        <button class="task-head"><svg><use href="#startpart"/></svg><span>Start Part</span><svg class="up" viewBox="0 0 8 5"><path fill="none" stroke="currentColor" stroke-width="1.500" d="m1 4 3-3 3 3"/></svg></button>
        <button class="task-item"><svg><use href="#body"/></svg><span>New Body</span></button>
      </div>
    </aside>
  </main>

  <footer class="status">
    <span class="msg">Preselected: bicep_plate.Part__Feature001.Edge108 (-105.00 mm, 18.46 mm, 0.00 mm)</span>
    <button class="notes"><svg viewBox="0 0 12 12"><path fill="#b58563" d="M0 0h12v12H0z"/><path fill="#f5dc88" d="M1 1h10v5l-2-2-2 2-2-2-2 1-2 1z"/></svg>229</button>
    <button class="navstyle"><svg viewBox="0 0 8 12"><rect x=".5" y=".5" width="7" height="11" rx="3" fill="#fff" stroke="#333a4a"/><path stroke="#333a4a" d="M4 3v3"/></svg>TinkerCAD</button>
    <span>737.81 mm x 437.49 mm</span>
  </footer>
</div>
<script src="app.js"></script>
</body>
</html>
```
FILE: styles.css
```css
* { box-sizing: border-box; }
html, body { height: 100%; }
body { margin: 0; overflow: hidden; background: #f1f1f1; color: #20213a; font: 500 11px/16px Inter, "Liberation Sans", sans-serif; }
button { border: 0; padding: 0; margin: 0; background: none; color: inherit; font: inherit; display: flex; align-items: center; }
h1, h2, p, ul { margin: 0; padding: 0; font: inherit; list-style: none; }
svg { display: block; flex: none; stroke-linejoin: round; }
.defs { position: absolute; width: 0; height: 0; }

/* icon paints */
.w, .n, .b, .l, .d, .y, .t, .r, .g { stroke: #343c58; }
.b, .l, .d { stroke: #274468; }
.y, .t { stroke: #5f4d40; }
.w[stroke], .n[stroke], .y[stroke], .r[stroke] { stroke: revert-layer; }
.w { fill: #fff; } .n { fill: none; } .b { fill: #2c78c0; } .l { fill: #6ba3cc; } .d { fill: #2d5690; }
.y { fill: #f5dc88; } .t { fill: #b58563; } .r { fill: #b11d20; } .g { fill: #6fc78e; }
.nos { stroke: none; } .thick { stroke-width: 2; }

/* page showing behind the application window */
.desktop { position: absolute; inset: 0; display: flex; align-items: flex-end; background: #eee; overflow: hidden; }
.browser-edge { position: absolute; top: 0; right: 0; bottom: 0; width: 24px; background: #f8f8f8; }
.edge-tab { display: block; height: 33px; background: #fafafa; border: solid #d9d9d9; border-width: 4px 3px 5px 0; border-radius: 0 12px 12px 0; }
.edge-bar { display: block; height: 40px; border-bottom: 1px solid #c4c4c4; background: #f0f0ef; }
.edge-bar + .edge-bar { height: 61px; background: #f6f6f6; }
.article { margin: 0 0 -9px 230px; font: 400 11px/18px Inter, "Liberation Sans", sans-serif; color: #3f4048; width: 468px; white-space: nowrap; }
.photo { width: 78px; height: 16px; }

.window { position: relative; display: flex; flex-direction: column; height: calc(100% - 15px); margin-right: 14px; background: #ebebeb; border: solid #b2b2b2; border-width: 0 1px 1px 0; border-radius: 0 10px 10px 6px; overflow: hidden; box-shadow: 0 8px 28px rgba(0, 0, 0, .5); }

.titlebar { display: flex; align-items: center; justify-content: center; height: 23px; padding-bottom: 1px; background: #f4f2f5; flex: none; }
.titlebar h1 { font-weight: 700; color: #403f49; }
.lights { position: absolute; left: 2px; display: flex; gap: 6px; }
.light { width: 11px; height: 11px; border-radius: 50%; }
.light-close { background: radial-gradient(circle, #b11d20 0 2px, #b9805f 3px); }
.light-min { background: #f3da86; border: 1px dashed #c9a765; }
.light-max { background: #6fc98e; }

.toolbar { display: flex; align-items: center; height: 30px; padding-top: 1px; flex: none; background: linear-gradient(#ededed, #c8c8c8); border-top: 1px solid #f6f6f6; border-bottom: 1px solid #a9a9a9; }
.tool { width: 32px; height: 26px; justify-content: center; }
.tool svg { width: 20px; height: 20px; }
.tool.menu { width: 39px; justify-content: flex-start; padding-left: 9px; }
.tool svg.chev { width: 8px; height: 5px; margin-top: 6px; }
.faded .chev { color: #8d8d96; }
.grip { width: 8px; height: 18px; background: repeating-linear-gradient(#8f8f94 0 1px, transparent 1px 4px) 4px 0 / 2px 18px no-repeat; }
.grip-first { width: 4px; background-position: 1px 0; }
.grip-narrow { width: 6px; }
.sep { width: 8px; height: 27px; background: repeating-linear-gradient(#85858a 0 1px, transparent 1px 2px) 4px 0 / 1px 27px no-repeat; }
.workbench { position: relative; margin: 0 8px 0 6px; width: 153px; }
.workbench select { display: block; width: 100%; height: 18px; padding: 0 24px; border: 0; border-radius: 4px; background: #fff; box-shadow: 0 1px 1px rgba(0, 0, 0, .25); appearance: none; font: inherit; line-height: 18px; color: inherit; }
.wb-icon { position: absolute; left: 6px; top: 3px; width: 12px; height: 12px; }
.wb-step { position: absolute; right: 1px; top: 2px; width: 14px; height: 14px; }

.work { display: flex; flex: 1; min-height: 0; border-top: 1px solid #c9c9c9; border-bottom: 1px solid #b5b5b5; }
.dock { display: flex; flex-direction: column; flex: none; }
.dock-left { width: 122px; border-right: 2px solid #b7b7ba; }
.dock-right { width: 297px; border-left: 1px solid #b7b7ba; }
.dock-head { display: flex; align-items: center; height: 15px; background: #f1f1f1; border-bottom: 1px solid #c2c2c2; flex: none; }
.dock-head h2 { flex: 1; text-align: center; }
.dock-left h2 { padding-left: 2px; }
.dock-right h2 { padding-left: 6px; }
.dock-btns { display: flex; gap: 7px; padding-right: 1px; color: #66666d; }
.dock-left .dock-btns { padding-right: 0; }
.dock-btns button { width: 13px; height: 13px; justify-content: center; background: #e4e4e4; box-shadow: 0 0 0 1px #cfcfcf; }
.dock-btns svg { width: 12px; height: 12px; }

.tree { flex: 317; display: flex; flex-direction: column; background: #fff; overflow: hidden; min-height: 0; }
.tree li { flex: 1; min-height: 0; display: flex; align-items: center; white-space: nowrap; padding-left: 1px; }
.tree .d1 { font-weight: 400; padding-left: 0; }
.tree .d1 span { margin-left: 3px; }
.tree .d2 { padding-left: 18px; }
.tree .d3 { padding-left: 35px; }
.tree li > svg { width: 13px; height: 13px; }
.tree li > svg.arrow { width: 8px; height: 5px; margin: 0 8px 0 1px; color: #a2a2a6; transform: rotate(-90deg); }
.tree li > svg.arrow.open { transform: none; }
.tree li > svg.eye { width: 12px; height: 10px; }
.tree .stack { display: grid; width: 13px; height: 13px; }
.tree .stack svg { grid-area: 1 / 1; width: 13px; height: 13px; }
.tree span { margin-left: 5px; }
.tree .off { color: #b4b4b7; font-weight: 400; }
.tree .off .icon { filter: grayscale(1); opacity: .3; }
.tree .blank { visibility: hidden; }
.splitter { height: 9px; display: flex; justify-content: center; align-items: center; background: #ebebeb; flex: none; border-bottom: 1px solid #b5b5b5; border-top: 1px solid #dcdcdc; }
.splitter i { width: 5px; height: 5px; border-radius: 50%; background: #cfcfcf; }
.props { flex: 346; margin-right: 2px; background: repeating-linear-gradient(#fff 0 18px, #eff1f0 18px 35px); border: solid #c9c9c9; border-width: 0 1px 1px 0; }
.prop-tabs { display: flex; height: 22px; padding: 5px 0 0 16px; background: #e3e3e3; flex: none; }
.prop-tabs button { width: 42px; height: 17px; justify-content: center; background: #fff; border-radius: 4px 0 0 4px; }
.prop-tabs .on { background: #2c7dc9; color: #fff; border-radius: 0 4px 4px 0; }

.center { flex: 1; min-width: 0; display: flex; flex-direction: column; }
.viewport { position: relative; flex: 1; min-height: 0; background: linear-gradient(#333366, #9696aa); overflow: hidden; }
.scene { width: 100%; height: 100%; }
.navcube { position: absolute; top: 2px; right: 1px; width: 117px; height: 117px; }
.cube-text { fill: #2c2c4a; font: 29px "DejaVu Sans", sans-serif; }
.cube-text .front { font-style: italic; }
.triad { position: absolute; right: 10px; bottom: 28px; width: 32px; height: 32px; overflow: visible; }
.triad-text { fill: #25263a; font: bold 14px "DejaVu Sans", sans-serif; }
.fps { position: absolute; left: 8px; bottom: 2px; }
.doc-tabs { display: flex; justify-content: center; height: 17px; background: #e9e9e9; flex: none; }
.doc-tab { display: flex; align-items: center; background: #fff; border-right: 1px solid #e3e3e3; white-space: nowrap; }
.doc-tab .x { width: 21px; justify-content: center; color: #66666d; }
.doc-tab .x svg { width: 8px; height: 8px; }
.doc-tab .name svg { width: 12px; height: 13px; margin: 0 6px 0 5px; }
.tab-start { width: 61px; border-radius: 4px 0 0 4px; }
.tab-start .x { width: 16px; }
.tab-week { width: 157px; }
.tab-week .name svg { margin-right: 4px; }
.tab-sheet { width: 144px; }
.tab-plate { width: 150px; }
.tab-elbow { width: 174px; border-radius: 0 4px 4px 0; }
.doc-tab.on { background: #2c7dc9; color: #fff; }
.doc-tab.on .x { color: #fff; }

.task { padding: 9px 9px 0 10px; display: flex; flex-direction: column; font-size: 9px; }
.task-head { height: 21px; font-weight: 700; border-bottom: 1px solid #c2c2c2; padding: 0 3px 0 2px; }
.task-item { height: 20px; margin-top: 11px; padding-left: 2px; }
.task svg { width: 10px; height: 10px; margin-right: 3px; }
.task .up { width: 9px; height: 6px; margin: 0 0 0 auto; color: #55555c; }

.status { display: flex; align-items: center; height: 33px; flex: none; padding-right: 36px; font-weight: 400; white-space: nowrap; }
.status .msg { flex: 1; margin-left: -2px; }
.notes svg { width: 12px; height: 12px; margin-right: 4px; }
.navstyle { margin: 0 37px 0 30px; }
.navstyle svg { width: 8px; height: 12px; margin-right: 7px; }
```
FILE: app.js
```js
const rows = [
  ["Po...10", 3, "closed", false, "pocket"], ["Po...11", 3, "closed", false, "pocket"], ["Li...rn", 3, "", false, "linear"],
  ["Po...12", 3, "closed", false, "pocket"], ["Li...01", 3, "", false, "linear"], ["Po...13", 3, "closed", false, "pocket"],
  ["Li...02", 3, "", false, "linear"], ["Po...14", 3, "closed", false, "pocket"], ["Fi...05", 3, "", false, "fillet"],
  ["Po...15", 3, "closed", false, "pocket"], ["Mi...02", 3, "", true, "mirror", true], ["base_plate", 2, "", false, "solid"],
  ["new_plate", 2, "open", false, "body"], ["Or...04", 3, "closed", false, "axes"], ["Ba...01", 3, "", false, "solid"],
  ["Po...04", 3, "closed", true, "fillet", true], ["Sk...07", 3, "", true, "sketchtree"], ["bas...001", 2, "", true, "solid"],
  ["elbow_p...e_final", 1, "closed", null, "file"],
];
document.getElementById("tree").innerHTML = rows.map(([name, depth, arrow, shown, icon, tip]) => `
  <li class="d${depth} ${shown === false ? "off" : ""}">
    <svg class="arrow ${arrow || "blank"}"><use href="#chev"/></svg>
    ${shown === null ? "" : `<svg class="eye"><use href="#${shown ? "eye" : "eyeoff"}"/></svg>`}
    <div class="stack icon"><svg><use href="#${icon}"/></svg>${tip ? '<svg><use href="#tip"/></svg>' : ""}</div>
    <span>${name}</span>
  </li>`).join("");

/* staggered slits of the flexible band */
const SLOPE = 0.2345, PITCH = 13.75, PERIOD = 92.5;
let slits = "", tops = "";
for (let i = 0; i < 26; i++) {
  const x0 = 379 + i * PITCH;
  for (let k = -1; k < 11; k++) {
    const y = 115 + k * PERIOD + (i % 2 ? PERIOD / 2 : 0) + i * 0.25;
    const x = x0 + (y - 82) * SLOPE, h = 84;
    slits += `M${x} ${y}h7l${h * SLOPE} ${h}h-7z`;
    tops += `M${x + 1} ${y}h6l4 16h-6z`;
  }
}
document.getElementById("slits").innerHTML =
  `<path fill="#55555f" stroke="#454550" d="${slits}"/><path fill="#262640" stroke="none" d="${tops}"/>`;

document.getElementById("ribs").innerHTML =
  [588, 600, 615, 644, 673, 702, 730, 759, 787, 813, 841, 868, 891, 903, 915, 927, 938].map(x => {
    const t = (x - 585) / 353, y = 973 + 66 * t * (1 - t) + 8 * t;
    return `<path d="M${x} ${y}l-6 34"/>`;
  }).join("");

document.getElementById("slots").innerHTML =
  [[166, 314], [211, 315], [233, 600], [279, 600], [971, 334], [1017, 334], [1039, 620], [1085, 620]].map(([x, y]) =>
    `<g transform="translate(${x} ${y})"><path fill="#acabbb" d="M0 0H25L54 128H30Z"/><path fill="#77778a" d="M0 0H25L11 40Z"/><path fill="#3a3a66" d="M11 40 8 34 30 128H36Z"/></g>`).join("");
```
